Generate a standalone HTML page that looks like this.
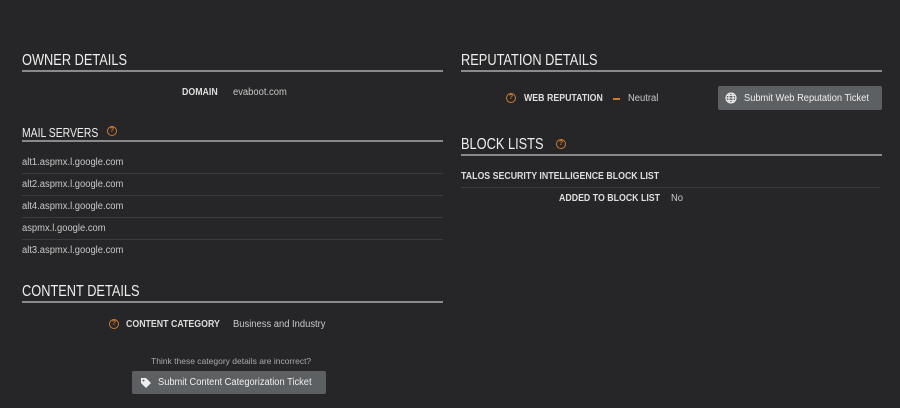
<!DOCTYPE html><html><head><style>
body{margin:0;width:900px;height:408px;background:#262628;font-family:"Liberation Sans",sans-serif;color:#ddd;position:relative;overflow:hidden}
.a{position:absolute;white-space:nowrap;transform-origin:0 0}
.h{font-size:16px;color:#eee;transform:scaleX(0.8)}
.ln{position:absolute;height:2px;background:#8a8a8c}
.sl{position:absolute;height:1px;background:#3c3c3e}
.l{font-size:10px;font-weight:bold;color:#ddd;transform:scaleX(0.88)}
.v{font-size:10px;color:#c8c8c8;transform:scaleX(0.94)}
.q{position:absolute;width:8px;height:8px;border:1.2px solid #d07a30;border-radius:50%;font-size:7px;color:#d07a30;text-align:center;line-height:8px;font-weight:bold}
.btn{position:absolute;background:#5d6063;border-radius:2px;color:#eee;font-size:10px}
.bt{transform:scaleX(0.93)}
</style></head><body>
<div class="a h" style="left:22px;top:52px">OWNER DETAILS</div>
<div class="ln" style="left:22px;top:70px;width:421px"></div>
<div class="a l" style="left:182px;top:87px">DOMAIN</div>
<div class="a v" style="left:233px;top:87px">evaboot.com</div>
<div class="a h" style="left:22px;top:125px;font-size:13px">MAIL SERVERS</div>
<div class="q" style="left:107px;top:126px">?</div>
<div class="ln" style="left:22px;top:140px;width:421px;height:1.5px"></div>
<div class="a v" style="left:22px;top:157px">alt1.aspmx.l.google.com</div>
<div class="sl" style="left:22px;top:173px;width:421px"></div>
<div class="a v" style="left:22px;top:179px">alt2.aspmx.l.google.com</div>
<div class="sl" style="left:22px;top:195px;width:421px"></div>
<div class="a v" style="left:22px;top:201px">alt4.aspmx.l.google.com</div>
<div class="sl" style="left:22px;top:217px;width:421px"></div>
<div class="a v" style="left:22px;top:223px">aspmx.l.google.com</div>
<div class="sl" style="left:22px;top:239px;width:421px"></div>
<div class="a v" style="left:22px;top:245px">alt3.aspmx.l.google.com</div>
<div class="a h" style="left:22px;top:283px">CONTENT DETAILS</div>
<div class="ln" style="left:22px;top:301px;width:421px"></div>
<div class="q" style="left:109px;top:319px">?</div>
<div class="a l" style="left:126px;top:319px">CONTENT CATEGORY</div>
<div class="a v" style="left:233px;top:319px">Business and Industry</div>
<div class="a" style="left:151px;top:356px;font-size:8.5px;color:#aaa">Think these category details are incorrect?</div>
<div class="btn" style="left:132px;top:371px;width:194px;height:23px"><svg class="a" style="left:8px;top:6px" width="12" height="12" viewBox="0 0 12 12"><path d="M1 1h5l5 5-5 5-5-5z" fill="#eee"/><circle cx="3.5" cy="3.5" r="1" fill="#5d6063"/></svg><span class="a bt" style="left:26px;top:6px">Submit Content Categorization Ticket</span></div>
<div class="a h" style="left:461px;top:52px">REPUTATION DETAILS</div>
<div class="ln" style="left:461px;top:70px;width:421px"></div>
<div class="q" style="left:506px;top:93px">?</div>
<div class="a l" style="left:524px;top:93px">WEB REPUTATION</div>
<div class="a" style="left:613px;top:98px;width:7px;height:2px;background:#d07a30"></div>
<div class="a v" style="left:628px;top:93px">Neutral</div>
<div class="btn" style="left:718px;top:86px;width:164px;height:24px"><svg class="a" style="left:7px;top:6px" width="12" height="12" viewBox="0 0 12 12" fill="none" stroke="#eee" stroke-width="1.1"><circle cx="6" cy="6" r="5"/><ellipse cx="6" cy="6" rx="2.2" ry="5"/><path d="M1 6h10M2 3.3h8M2 8.7h8"/></svg><span class="a bt" style="left:26px;top:7px">Submit Web Reputation Ticket</span></div>
<div class="a h" style="left:461px;top:136px">BLOCK LISTS</div>
<div class="q" style="left:556px;top:139px">?</div>
<div class="ln" style="left:461px;top:154px;width:421px"></div>
<div class="a l" style="left:461px;top:171px">TALOS SECURITY INTELLIGENCE BLOCK LIST</div>
<div class="sl" style="left:461px;top:187px;width:419px"></div>
<div class="a l" style="left:559px;top:193px">ADDED TO BLOCK LIST</div>
<div class="a v" style="left:671px;top:193px">No</div>
</body></html>
